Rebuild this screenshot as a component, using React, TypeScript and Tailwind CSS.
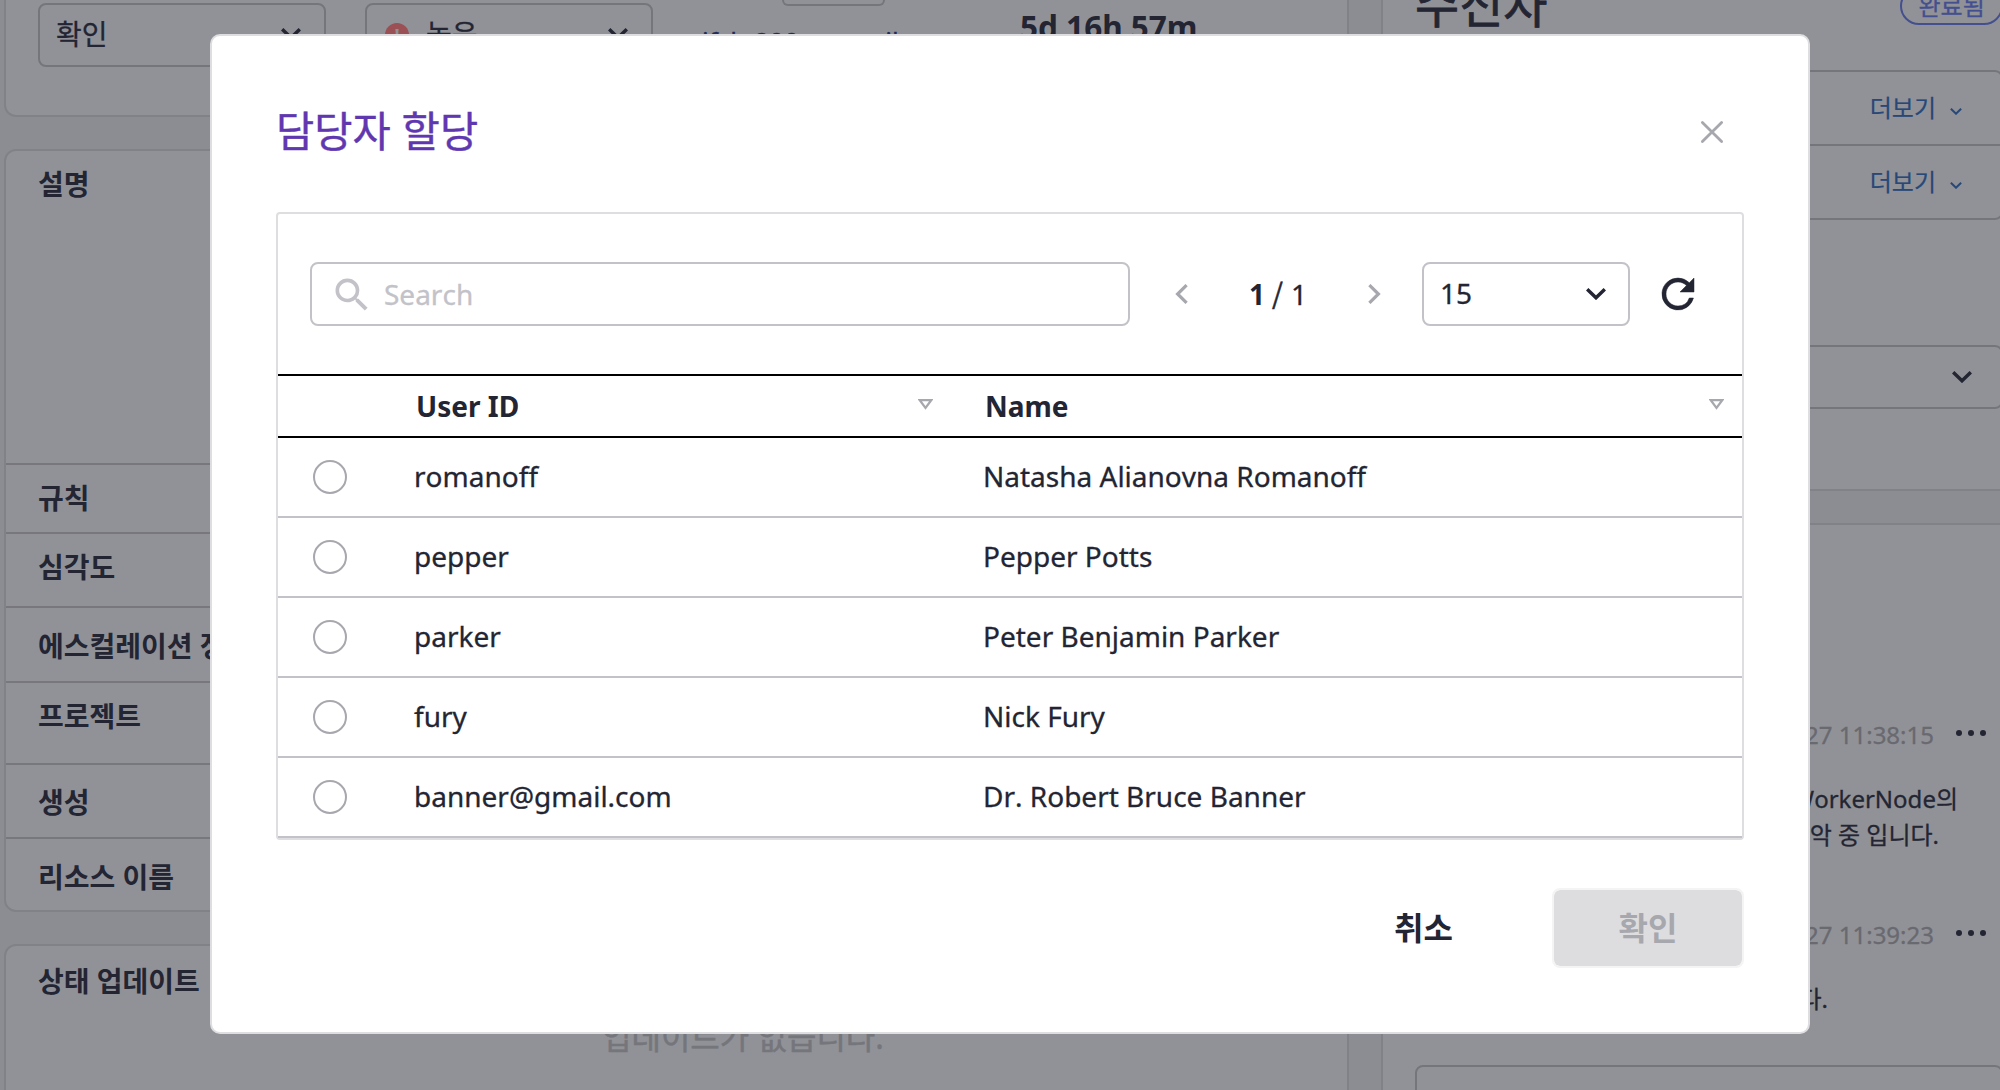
import React from "react";

const users = [
  { id: "romanoff", name: "Natasha Alianovna Romanoff" },
  { id: "pepper", name: "Pepper Potts" },
  { id: "parker", name: "Peter Benjamin Parker" },
  { id: "fury", name: "Nick Fury" },
  { id: "banner@gmail.com", name: "Dr. Robert Bruce Banner" },
];

function ChevronDown({ className }: { className: string }) {
  return (
    <svg viewBox="0 0 20 12" fill="none" stroke="currentColor" strokeWidth="3.4" strokeLinecap="butt" className={className}>
      <path d="M1.2 1.2 10 9.8 18.8 1.2" />
    </svg>
  );
}

function PageChevron({ flip }: { flip?: boolean }) {
  return (
    <svg viewBox="0 0 13 20" fill="none" stroke="currentColor" strokeWidth="3.2" className={flip ? "h-5 w-[13px] -scale-x-100" : "h-5 w-[13px]"}>
      <path d="M11.6 1.1 2.6 10l9 8.9" />
    </svg>
  );
}

function SortIcon() {
  return (
    <svg viewBox="0 0 15 11" fill="none" stroke="#a7a7ae" strokeWidth="2.2" className="h-[11px] w-[15px]">
      <path d="M1.8 1.2h11.4L7.5 8.8z" />
    </svg>
  );
}

function Dots() {
  return (
    <div className="flex w-[30px] justify-between">
      <i className="size-[6px] rounded-full bg-[#232533]" />
      <i className="size-[6px] rounded-full bg-[#232533]" />
      <i className="size-[6px] rounded-full bg-[#232533]" />
    </div>
  );
}

function DetailRow({ label, className }: { label: string; className: string }) {
  return (
    <div className={`border-t-2 border-[#77777d] pl-8 text-[28px] leading-[40px] font-bold ${className}`}>{label}</div>
  );
}

function MoreRow({ className }: { className: string }) {
  return (
    <div className={`flex items-center justify-end pr-[39px] text-[24px] text-[#274878] ${className}`}>
      <span className="[-webkit-text-stroke:0.2px]">더보기</span>
      <ChevronDown className="mt-[6px] ml-[14px] h-[7px] w-[12px]" />
    </div>
  );
}

function Background() {
  return (
    <div className="flex h-full w-[2010px] bg-[#8c8d92] pl-1">
      <div className="flex w-[1345px] shrink-0 flex-col">
        <section className="flex h-[117px] shrink-0 items-start rounded-b-[12px] border-2 border-t-0 border-[#818287] bg-[#919297] pt-[3px] pl-8 text-[28px]">
          <div className="flex h-16 w-72 items-center rounded-[8px] border-2 border-[#75767c] pr-[23px] pl-[16px]">
            <span className="-mt-[2px] [-webkit-text-stroke:0.3px]">확인</span>
            <ChevronDown className="-mt-[3px] ml-auto h-3 w-5" />
          </div>
          <div className="ml-[39px] flex h-16 w-72 items-center rounded-[8px] border-2 border-[#75767c] pr-[23px] pl-[18px]">
            <span className="flex h-6 w-6 items-center justify-center rounded-full bg-[#9b5055] text-[18px] font-bold text-[#919297]">!</span>
            <span className="-mt-[3px] ml-[17px] [-webkit-text-stroke:0.3px]">높음</span>
            <ChevronDown className="-mt-[3px] ml-auto h-3 w-5" />
          </div>
          <div className="-mt-[3px] ml-[49px] w-[238px] shrink-0">
            <div className="ml-[80px] h-[6px] w-[103px] rounded-b-[7px] border-2 border-t-0 border-[#75767c]" />
            <div className="mt-[19px] text-[26px] leading-[32px] whitespace-nowrap text-[#1e2c58] [-webkit-text-stroke:0.3px]">ifcb-200-macroil</div>
          </div>
          <div className="mt-[4px] ml-[80px] text-[31.5px] leading-10 font-bold whitespace-nowrap">5d 16h 57m</div>
        </section>

        <section className="mt-[32px] flex h-[763px] shrink-0 flex-col rounded-[12px] border-2 border-[#818287] bg-[#919297]">
          <div className="h-[312px] pt-[13px] pl-8 text-[28px] leading-[40px] font-bold">설명</div>
          <DetailRow className="h-[69px] pt-[13px]" label="규칙" />
          <DetailRow className="h-[74px] pt-[13px]" label="심각도" />
          <DetailRow className="h-[75px] pt-[18px]" label="에스컬레이션 정책" />
          <DetailRow className="h-[82px] pt-[13px]" label="프로젝트" />
          <DetailRow className="h-[74px] pt-[17px]" label="생성" />
          <DetailRow className="h-[73px] pt-[18px]" label="리소스 이름" />
        </section>

        <section className="mt-8 h-[200px] shrink-0 rounded-[12px] border-2 border-[#818287] bg-[#919297] pt-[15px] text-[28px]">
          <div className="pl-8 leading-[40px] font-bold">상태 업데이트</div>
          <div className="mt-[14px] pl-[596px] text-[32px] leading-[44px] text-[#75767c] [-webkit-text-stroke:0.5px]">업데이트가 없습니다.</div>
        </section>
      </div>

      <div className="ml-8 flex w-[640px] shrink-0 flex-col">
        <section className="h-[491px] shrink-0 border-b-2 border-l-2 border-[#818287] bg-[#919297] pl-8">
          <div className="flex h-[70px] items-start">
            <h2 className="mt-[-27px] text-[48px] leading-[64px] font-normal [-webkit-text-stroke:0.8px]">수신자</h2>
            <span className="mt-[-13px] ml-[353px] flex h-[38px] w-[103px] shrink-0 items-center rounded-full border-2 border-[#444f8f] pl-[16px] text-[24px] text-[#444f8f] [-webkit-text-stroke:0.3px]">완료됨</span>
          </div>
          <div className="mr-[18px] h-[150px] rounded-[8px] border-2 border-[#75767c]">
            <MoreRow className="h-[72px]" />
            <MoreRow className="h-[74px] border-t-2 border-[#75767c]" />
          </div>
          <div className="mt-[125px] mr-[18px] flex h-16 items-center justify-end rounded-[8px] border-2 border-[#75767c] pr-[29px]">
            <ChevronDown className="h-3 w-5" />
          </div>
        </section>
        <section className="mt-[32px] h-[600px] shrink-0 border-t-2 border-l-2 border-[#818287] bg-[#919297] pt-[190px] pl-8 text-[24px] [-webkit-text-stroke:0.3px]">
          <div className="flex h-[40px] items-center justify-end pr-[35px]">
            <span className="mr-[22px] text-[#696970]">2022-05-27 11:38:15</span>
            <div className="mb-[5px]"><Dots /></div>
          </div>
          <div className="mt-[26px] pr-[63px] text-right leading-[36px]">WorkerNode의</div>
          <div className="pr-[82px] text-right leading-[36px]">파악 중 입니다.</div>
          <div className="mt-[62px] flex h-[40px] items-center justify-end pr-[35px]">
            <span className="mr-[22px] text-[#696970]">2022-05-27 11:39:23</span>
            <div className="mb-[5px]"><Dots /></div>
          </div>
          <div className="mt-[26px] pr-[193px] text-right leading-[36px]">조치 중입니다.</div>
          <div className="mt-[48px] mr-[18px] h-20 rounded-[8px] border-2 border-[#75767c]" />
        </section>
      </div>
    </div>
  );
}

function Toolbar() {
  return (
    <div className="flex h-40 items-center pl-8">
      <div className="flex h-16 w-[820px] items-center rounded-[8px] border-2 border-[#c2c2c8] pl-[18px] text-[#c2c2c8]">
        <svg viewBox="0 0 24 24" fill="currentColor" className="mt-[1px] size-11">
          <path d="M15.5 14h-.79l-.28-.27A6.471 6.471 0 0 0 16 9.5 6.5 6.5 0 1 0 9.5 16c1.61 0 3.09-.59 4.23-1.57l.27.28v.79l5 4.99L20.49 19l-4.99-5zm-6 0C7.01 14 5 11.99 5 9.5S7.01 5 9.5 5 14 7.01 14 9.5 11.99 14 9.5 14z" />
        </svg>
        <span className="ml-[10px] text-[28px] [-webkit-text-stroke:0.3px]">Search</span>
      </div>
      <div className="ml-[45px] text-[#a7a7ae]"><PageChevron /></div>
      <div className="ml-[61px] flex w-[59px] items-center text-[28px]">
        <b>1</b>
        <span className="ml-[7px] font-['Noto_Sans_CJK_KR'] leading-[40px] [-webkit-text-stroke:0.5px]">/</span>
        <span className="ml-[8px] [-webkit-text-stroke:0.3px]">1</span>
      </div>
      <div className="ml-[60px] text-[#a7a7ae]"><PageChevron flip /></div>
      <div className="ml-[41px] flex h-16 w-52 items-center rounded-[8px] border-2 border-[#c2c2c8] pr-[22px] pl-4 text-[28px]">
        <span className="-mt-[2px] [-webkit-text-stroke:0.3px]">15</span>
        <ChevronDown className="ml-auto h-3 w-5" />
      </div>
      <svg viewBox="0 0 24 24" fill="currentColor" stroke="currentColor" strokeWidth="0.25" className="ml-6 size-12">
        <path d="M17.65 6.35A7.958 7.958 0 0 0 12 4a8 8 0 1 0 7.73 10h-2.08A5.99 5.99 0 0 1 12 18c-3.31 0-6-2.69-6-6s2.69-6 6-6c1.66 0 3.14.69 4.22 1.78L13 11h7V4l-2.35 2.35z" />
      </svg>
    </div>
  );
}

function AssignDialog() {
  return (
    <div className="absolute top-[34px] left-[210px] h-[1000px] w-[1600px] rounded-[10px] border-2 border-[#dedee0] bg-white px-16">
      <header className="flex h-44 items-center">
        <h1 className="mt-[13px] text-[41.6px] leading-[60px] font-normal text-[#5f38b0] [-webkit-text-stroke:0.4px]">담당자 할당</h1>
        <svg viewBox="0 0 24 24" fill="none" stroke="#a7a7ae" strokeWidth="2.8" strokeLinecap="round" className="mt-[16px] mr-[20px] ml-auto size-6">
          <path d="M2.4 2.6 21.6 21.4M21.6 2.6 2.4 21.4" />
        </svg>
      </header>
      <div className="h-[628px] rounded-[4px] border-2 border-[#dedee0]">
        <Toolbar />
        <div className="flex h-16 items-center border-y-2 border-black text-[28px] font-bold">
          <div className="w-[135px]" />
          <div className="flex w-[571px] items-center justify-between pr-[51px]">
            <span className="ml-[3px]">User ID</span>
            <span className="mb-[4px]"><SortIcon /></span>
          </div>
          <div className="flex flex-1 items-center justify-between pr-[18px]">
            <span className="ml-[1px]">Name</span>
            <span className="mb-[4px]"><SortIcon /></span>
          </div>
        </div>
        {users.map((u) => (
          <div key={u.id} className="flex h-20 items-center border-b-2 border-[#c2c2c8] text-[28px]">
            <i className="ml-[35px] size-[34px] rounded-full border-2 border-[#a7a7ae]" />
            <span className="-mt-[2px] ml-[67px] w-[569px] [-webkit-text-stroke:0.3px]">{u.id}</span>
            <span className="-mt-[2px] [-webkit-text-stroke:0.3px]">{u.name}</span>
          </div>
        ))}
      </div>
      <footer className="mt-[48px] flex items-center justify-end text-[32px] font-bold">
        <button className="px-4">취소</button>
        <button className="ml-[83px] h-20 w-[192px] rounded-[8px] border-2 border-[#f4f4f5] bg-[#dddddf] bg-clip-padding text-[#a7a7ae]">확인</button>
      </footer>
    </div>
  );
}

export default function App() {
  return (
    <div
      lang="ko"
      className="relative h-[1090px] w-[2000px] overflow-hidden font-['Noto_Sans','Noto_Sans_CJK_KR',sans-serif] text-[#232533] [font-kerning:none]"
    >
      <Background />
      <AssignDialog />
    </div>
  );
}
